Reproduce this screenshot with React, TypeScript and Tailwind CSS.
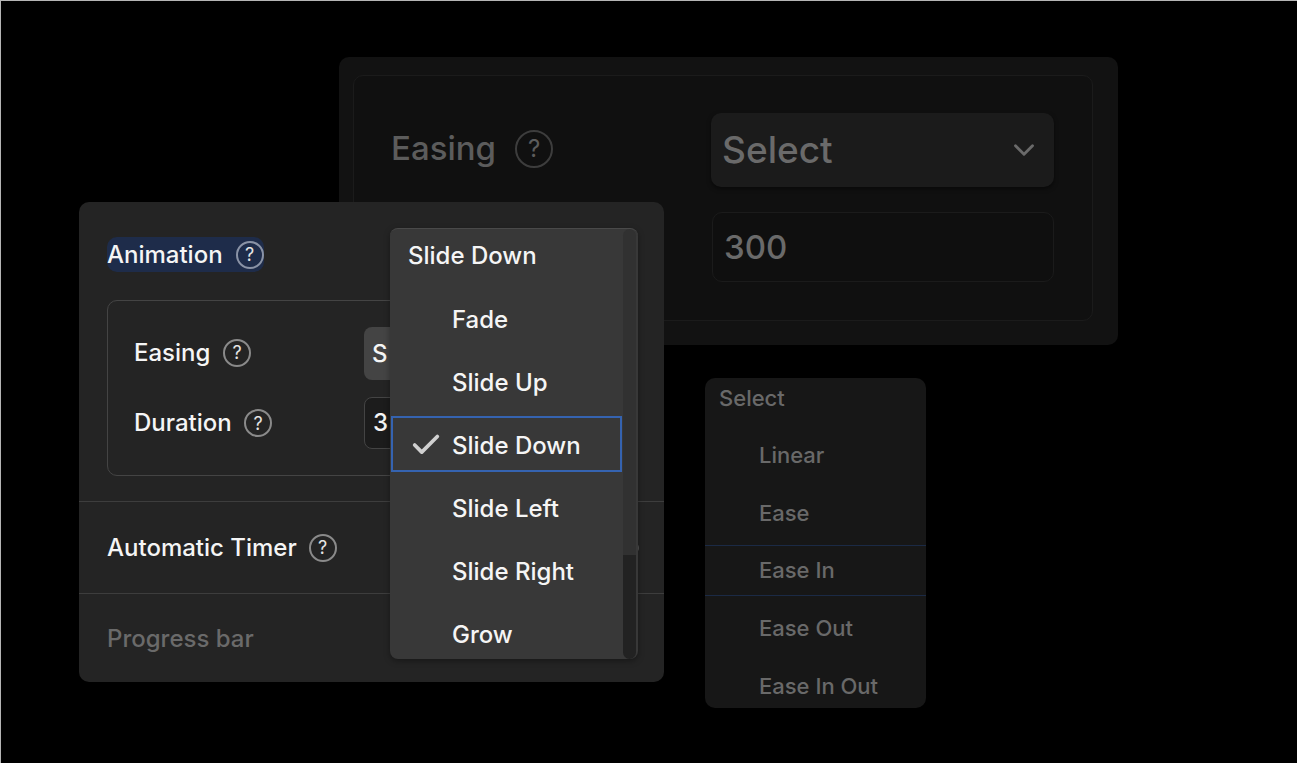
import { Check, ChevronDown } from "lucide-react";

function Help({ className }: { className: string }) {
  return (
    <span className={`inline-flex shrink-0 items-center justify-center rounded-full border-2 ${className}`}>
      ?
    </span>
  );
}

const animationOptions = ["Fade", "Slide Up", "Slide Down", "Slide Left", "Slide Right", "Grow"];
const easingOptions = ["Linear", "Ease", "Ease In", "Ease Out", "Ease In Out"];

function BackPanel() {
  return (
    <div className="absolute left-[339px] top-[57px] h-[288px] w-[779px] rounded-[10px] bg-[#121212] pl-[14px] pr-[25px] pt-[18px]">
      <div className="grid h-[246px] grid-cols-[320px_343px] content-start gap-y-[25px] rounded-[10px] border border-[#1b1b1b] bg-[#101010] pl-[37px] pt-[37px]">
        <div className="flex items-center pb-[2px]">
          <span className="text-[33px] font-medium text-[#5c5c5c]">Easing</span>
          <Help className="ml-[19px] h-[38px] w-[38px] border-[#3d3d3d] text-[24px] text-[#5c5c5c]" />
        </div>
        <div className="flex h-[74px] items-center justify-between rounded-[10px] bg-[#1b1b1b] pl-[11px] pr-[13px] shadow-[0_2px_4px_rgba(0,0,0,0.5)]">
          <span className="text-[37px] font-medium text-[#6a6a6a]">Select</span>
          <ChevronDown size={34} strokeWidth={2} className="text-[#6a6a6a]" />
        </div>
        <div />
        <div className="ml-px flex h-[70px] items-center rounded-[10px] border border-[#1b1b1b] bg-[#0f0f0f] pl-[11px] pt-[2px]">
          <span className="text-[33px] font-medium text-[#6a6a6a]">300</span>
        </div>
      </div>
    </div>
  );
}

function FrontPanel() {
  return (
    <div className="absolute left-[79px] top-[202px] flex h-[480px] w-[585px] flex-col rounded-[10px] bg-[#242424]">
      <div className="pl-[28px] pt-[35px]">
        <div className="flex h-[35px] w-[157px] items-center rounded-[10px] bg-[#1e2c4a]">
          <span className="text-[24px] font-medium text-[#f5f5f5]">Animation</span>
          <Help className="ml-[13px] h-[28px] w-[28px] border-[#8a93a6] text-[18px] text-[#e5e5e5]" />
        </div>
      </div>
      <div className="ml-[28px] mt-[28px] h-[176px] w-[529px] rounded-[10px] border border-[#444444] pl-[26px] pt-[26px]">
        <div className="flex h-[53px] items-center">
          <span className="w-[89px] pb-[2px] text-[24px] font-medium text-[#f5f5f5]">Easing</span>
          <Help className="mb-[2px] h-[28px] w-[28px] border-[#8a8a8a] text-[18px] text-[#e5e5e5]" />
          <div className="ml-[113px] flex h-[53px] w-[200px] items-center rounded-[8px] bg-[#444444] pl-[8px]">
            <span className="text-[24px] font-medium text-[#f5f5f5]">S</span>
          </div>
        </div>
        <div className="mt-[17px] flex h-[52px] items-center">
          <span className="w-[110px] text-[24px] font-medium text-[#f5f5f5]">Duration</span>
          <Help className="h-[28px] w-[28px] border-[#8a8a8a] text-[18px] text-[#e5e5e5]" />
          <div className="ml-[92px] flex h-[52px] w-[200px] items-center rounded-[8px] border border-[#444444] bg-[#1c1c1c] pl-[8px]">
            <span className="text-[24px] font-medium text-[#f5f5f5]">3</span>
          </div>
        </div>
      </div>
      <div className="mt-[25px] flex h-[93px] items-center border-y border-[#3d3d3d] pl-[28px] pr-[25px]">
        <span className="text-[24px] font-medium text-[#f5f5f5]">Automatic Timer</span>
        <Help className="ml-[12px] h-[28px] w-[28px] border-[#8a8a8a] text-[18px] text-[#e5e5e5]" />
        <span className="ml-auto h-[12px] w-[40px] rounded-full bg-[#555555]" />
      </div>
      <div className="flex flex-1 items-center pl-[28px] pr-[26px] pt-[2px]">
        <span className="text-[24px] font-medium text-[#6a6a6a]">Progress bar</span>
        <span className="ml-auto h-[24px] w-[40px] rounded-full bg-[#303030]" />
      </div>
    </div>
  );
}

function AnimationDropdown() {
  return (
    <div className="absolute left-[390px] top-[228px] flex h-[431px] w-[248px] overflow-hidden rounded-[8px] border-t border-[#4a4a4a] bg-[#383838] shadow-[0_2px_6px_rgba(0,0,0,0.35)]">
      <div className="flex-1">
        <div className="flex h-[54px] items-center pl-[18px] text-[24px] font-medium text-[#f5f5f5]">Slide Down</div>
        <div className="pt-[5px]">
          {animationOptions.map((option) => {
            const selected = option === "Slide Down";
            return (
              <div
                key={option}
                className={`flex h-[63px] items-center pl-[62px] text-[24px] font-medium text-[#f5f5f5] ${
                  selected ? "relative" : ""
                }`}
              >
                {selected && (
                  <>
                    <span className="absolute bottom-[5px] left-px right-px top-[2px] border-2 border-[#3563b0]" />
                    <Check size={34} strokeWidth={2.6} className="absolute left-[19px] top-[14px] text-[#d0d0d0]" />
                  </>
                )}
                {option}
              </div>
            );
          })}
        </div>
      </div>
      <div className="flex w-[15px] flex-col pr-[2px]">
        <div className="h-[326px] rounded-t-[8px] bg-[#313131]" />
        <div className="flex-1 rounded-b-[8px] bg-[#222222]" />
      </div>
    </div>
  );
}

function EasingDropdown() {
  return (
    <div className="absolute left-[705px] top-[378px] h-[330px] w-[221px] overflow-hidden rounded-[10px] bg-[#171717]">
      <div className="flex h-[40px] items-center pl-[14px] text-[22px] font-medium text-[#696969]">Select</div>
      <div className="pt-[8px]">
        {easingOptions.map((option) => (
          <div
            key={option}
            className={
              option === "Ease In"
                ? "my-[3px] flex h-[51px] items-center border-y border-[#1b2a45] pl-[54px] text-[22px] font-medium text-[#696969]"
                : "flex h-[58px] items-center pl-[54px] text-[22px] font-medium text-[#696969]"
            }
          >
            {option}
          </div>
        ))}
      </div>
    </div>
  );
}

export default function App() {
  return (
    <div className="relative h-[763px] w-[1297px] overflow-hidden bg-black font-['Inter',sans-serif] shadow-[inset_1px_1px_0_#b5b5b5]">
      <BackPanel />
      <FrontPanel />
      <AnimationDropdown />
      <EasingDropdown />
    </div>
  );
}
